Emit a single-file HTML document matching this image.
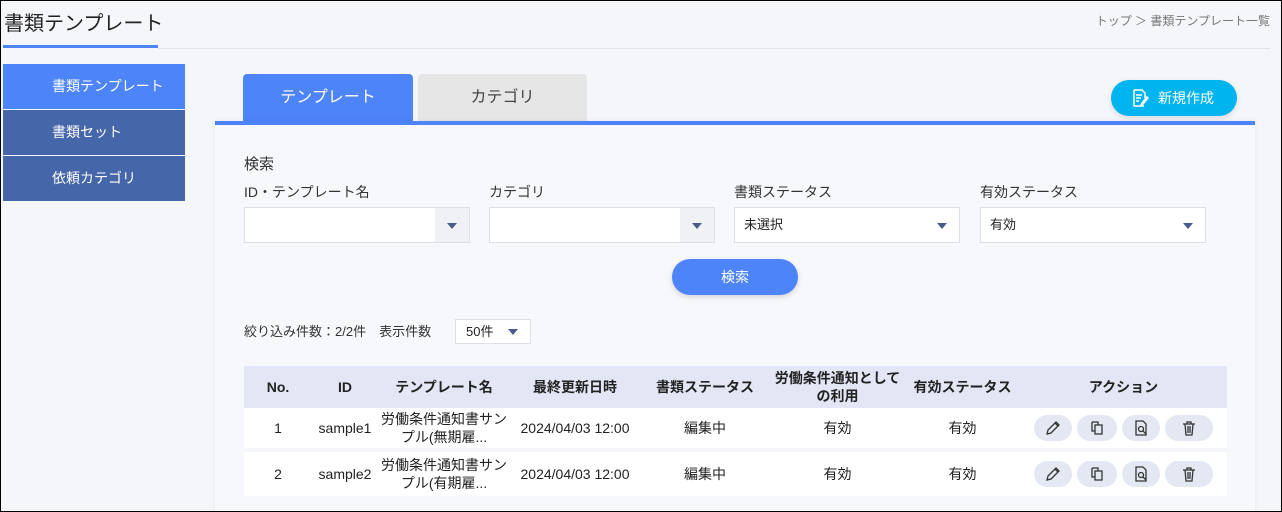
<!DOCTYPE html>
<html><head><meta charset="utf-8"><style>
*{box-sizing:border-box;margin:0;padding:0}
html,body{width:1282px;height:512px;overflow:hidden}
body{background:#f5f6fa;font-family:"Liberation Sans","Noto Sans CJK JP",sans-serif;color:#222;position:relative}
.a{position:absolute}
.side div{position:absolute;left:3px;width:182px;height:45px;color:#fff;font-size:14px;line-height:45px;padding-left:49px}
.lbl{font-size:14px;color:#333}
.inp{position:absolute;top:207px;width:226px;height:36px;background:#fff;border:1px solid #dcdfe6;font-size:13px;line-height:34px;padding-left:9px}
.inp .dd{position:absolute;right:0;top:0;width:34px;height:34px;background:#f0f1f5}
.tri{position:absolute;width:0;height:0;border-left:5px solid transparent;border-right:5px solid transparent;border-top:6px solid #4a5a8a}
table{border-collapse:collapse;font-size:14px}
td,th{text-align:center;vertical-align:middle}
th{font-weight:bold;background:#e3e7f5;height:42px;line-height:18px}
td{background:#fff;height:42px;line-height:18px}
tr.g td{border-top:4px solid #f5f6fa;height:46px}
.ab{display:inline-block;width:40px;height:26px;border-radius:13px;background:#e3e8f2;margin-right:5px;vertical-align:middle;position:relative}
.ab svg{position:absolute;left:50%;top:5px;margin-left:-8px}
</style></head><body>
<div class="a" style="left:4px;top:7px;font-size:20px;color:#222">書類テンプレート</div>
<div class="a" style="left:3px;top:45px;width:155px;height:3px;background:#4d84f8"></div>
<div class="a" style="left:158px;top:48px;width:1112px;height:1px;background:#e0e2ea"></div>
<div class="a" style="right:12px;top:12px;font-size:12px;color:#777">トップ ＞ 書類テンプレート一覧</div>
<div class="side">
<div style="top:64px;background:#4d84f8">書類テンプレート</div>
<div style="top:110px;background:#4566a8">書類セット</div>
<div style="top:156px;background:#4566a8">依頼カテゴリ</div>
</div>
<div class="a" style="left:243px;top:74px;width:170px;height:48px;background:#4d84f8;border-radius:4px 4px 0 0;color:#fff;font-size:16px;text-align:center;line-height:48px">テンプレート</div>
<div class="a" style="left:418px;top:74px;width:169px;height:48px;background:#e6e6e6;border-radius:4px 4px 0 0;color:#444;font-size:16px;text-align:center;line-height:48px">カテゴリ</div>
<div class="a" style="left:1111px;top:80px;width:126px;height:36px;background:#00b4f0;border-radius:18px;color:#fff;font-size:14px;line-height:36px;padding-left:47px;box-shadow:0 2px 6px rgba(0,0,0,.12)">新規作成
<svg class="a" style="left:20px;top:9px" width="18" height="18" viewBox="0 0 18 18" fill="none" stroke="#fff" stroke-width="1.5"><path d="M3 1h8l3 3v5M3 1v16h10"/><path d="M5 6h6M5 9h5M5 12h3"/><path d="M16 8l-5 6-1 2 2-1 5-6z"/></svg></div>
<div class="a" style="left:215px;top:121px;width:1040px;height:400px;background:#f7f8fb;border-top:4px solid #4d84f8;box-shadow:0 0 6px rgba(0,0,0,.06)"></div>
<div class="a lbl" style="left:244px;top:153px;font-size:15px">検索</div>
<div class="a lbl" style="left:244px;top:182px">ID・テンプレート名</div>
<div class="a lbl" style="left:489px;top:182px">カテゴリ</div>
<div class="a lbl" style="left:734px;top:182px">書類ステータス</div>
<div class="a lbl" style="left:980px;top:182px">有効ステータス</div>
<div class="inp" style="left:244px"><div class="dd"><div class="tri" style="left:12px;top:15px"></div></div></div>
<div class="inp" style="left:489px"><div class="dd"><div class="tri" style="left:12px;top:15px"></div></div></div>
<div class="inp" style="left:734px">未選択<div class="tri" style="right:12px;top:15px"></div></div>
<div class="inp" style="left:980px">有効<div class="tri" style="right:12px;top:15px"></div></div>
<div class="a" style="left:672px;top:259px;width:126px;height:36px;background:#4d84f8;border-radius:18px;color:#fff;font-size:14px;text-align:center;line-height:36px;box-shadow:0 2px 6px rgba(0,0,0,.15)">検索</div>
<div class="a lbl" style="left:244px;top:321px;font-size:13px">絞り込み件数：2/2件　表示件数</div>
<div class="a" style="left:455px;top:319px;width:76px;height:25px;background:#fff;border:1px solid #dcdfe6;font-size:13px;line-height:23px;padding-left:10px">50件<div class="tri" style="right:12px;top:9px"></div></div>
<table class="a" style="left:244px;top:366px;width:983px">
<tr><th style="width:68px">No.</th><th style="width:66px">ID</th><th style="width:132px">テンプレート名</th><th style="width:130px">最終更新日時</th><th style="width:130px">書類ステータス</th><th style="width:135px">労働条件通知として<br>の利用</th><th style="width:115px">有効ステータス</th><th>アクション</th></tr>
<tr><td>1</td><td>sample1</td><td>労働条件通知書サン<br>プル(無期雇...</td><td>2024/04/03 12:00</td><td>編集中</td><td>有効</td><td>有効</td><td>ACT</td></tr>
<tr class="g"><td>2</td><td>sample2</td><td>労働条件通知書サン<br>プル(有期雇...</td><td>2024/04/03 12:00</td><td>編集中</td><td>有効</td><td>有効</td><td>ACT</td></tr>
</table>
<div class="a" style="left:0;top:0;width:1282px;height:512px;border:1px solid #000;pointer-events:none"></div>
<script>
var act='<span class="ab" style="width:38px"><svg width="16" height="16" viewBox="0 0 16 16" fill="none" stroke="#333" stroke-width="1.3"><path d="M11 2l3 3-8 8-4 1 1-4z"/><path d="M10 3l3 3"/></svg></span><span class="ab"><svg width="16" height="16" viewBox="0 0 16 16" fill="none" stroke="#333" stroke-width="1.3"><path d="M3 2h6v3M3 2v9h3"/><path d="M6 5h7v9H6z"/></svg></span><span class="ab" style="width:38px"><svg width="16" height="16" viewBox="0 0 16 16" fill="none" stroke="#333" stroke-width="1.3"><path d="M3 1h7l3 3v11H3z"/><circle cx="8" cy="9" r="2.5"/><path d="M10 11l3 3"/></svg></span><span class="ab" style="width:48px"><svg width="16" height="16" viewBox="0 0 16 16" fill="none" stroke="#333" stroke-width="1.3"><path d="M2 4h12M6 4V2h4v2M4 4l1 11h6l1-11M7 6v7M9 6v7"/></svg></span>';
document.querySelectorAll('td').forEach(function(t){if(t.textContent=='ACT'){t.innerHTML=act;t.style.textAlign='left';t.style.paddingLeft='14px';t.style.whiteSpace='nowrap'}});
</script>
</body></html>
